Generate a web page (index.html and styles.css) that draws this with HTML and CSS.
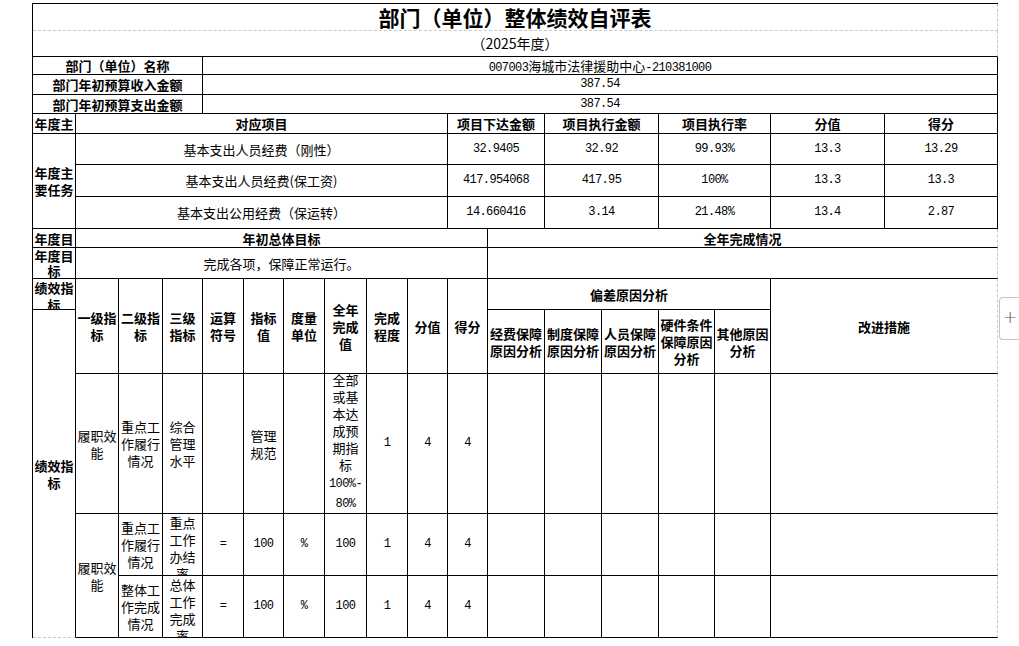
FILE: index.html
```html
<!DOCTYPE html>
<html lang="zh-CN">
<head>
<meta charset="utf-8">
<title>部门（单位）整体绩效自评表</title>
<link rel="stylesheet" href="styles.css">
</head>
<body>
<div class="sheet">
  <div class="c s18 title"><span>部门（单位）整体绩效自评表</span></div>
  <div class="c s18 subtitle"><span>（2025年度）</span></div>

  <div class="c s4 b"><span>部门（单位）名称</span></div>
  <div class="c s14"><span><span class="n">007003</span>海城市法律援助中心<span class="n">-210381000</span></span></div>
  <div class="c s4 b"><span>部门年初预算收入金额</span></div>
  <div class="c s14"><span class="n">387.54</span></div>
  <div class="c s4 b"><span>部门年初预算支出金额</span></div>
  <div class="c s14"><span class="n">387.54</span></div>

  <div class="c b"><span>年度主</span></div>
  <div class="c s9 b"><span>对应项目</span></div>
  <div class="c s2 b"><span>项目下达金额</span></div>
  <div class="c s2 b"><span>项目执行金额</span></div>
  <div class="c s2 b"><span>项目执行率</span></div>
  <div class="c b"><span>分值</span></div>
  <div class="c b"><span>得分</span></div>

  <div class="c r3 b"><span>年度主<br>要任务</span></div>
  <div class="c s9"><span>基本支出人员经费（刚性）</span></div>
  <div class="c s2"><span class="n">32.9405</span></div>
  <div class="c s2"><span class="n">32.92</span></div>
  <div class="c s2"><span class="n">99.93%</span></div>
  <div class="c"><span class="n">13.3</span></div>
  <div class="c"><span class="n">13.29</span></div>

  <div class="c s9"><span>基本支出人员经费(保工资)</span></div>
  <div class="c s2"><span class="n">417.954068</span></div>
  <div class="c s2"><span class="n">417.95</span></div>
  <div class="c s2"><span class="n">100%</span></div>
  <div class="c"><span class="n">13.3</span></div>
  <div class="c"><span class="n">13.3</span></div>

  <div class="c s9"><span>基本支出公用经费（保运转）</span></div>
  <div class="c s2"><span class="n">14.660416</span></div>
  <div class="c s2"><span class="n">3.14</span></div>
  <div class="c s2"><span class="n">21.48%</span></div>
  <div class="c"><span class="n">13.4</span></div>
  <div class="c"><span class="n">2.87</span></div>

  <div class="c b"><span>年度目</span></div>
  <div class="c s10 b"><span>年初总体目标</span></div>
  <div class="c s7 b edge"><span>全年完成情况</span></div>

  <div class="c b tight"><span>年度目<br>标</span></div>
  <div class="c s10"><span>完成各项，保障正常运行。</span></div>
  <div class="c s7 edge"></div>

  <div class="c b"><span>绩效指<br>标</span></div>
  <div class="c r2 b"><span>一级指<br>标</span></div>
  <div class="c r2 b"><span>二级指<br>标</span></div>
  <div class="c r2 b"><span>三级<br>指标</span></div>
  <div class="c r2 b"><span>运算<br>符号</span></div>
  <div class="c r2 b"><span>指标<br>值</span></div>
  <div class="c r2 b"><span>度量<br>单位</span></div>
  <div class="c r2 b"><span>全年<br>完成<br>值</span></div>
  <div class="c r2 b"><span>完成<br>程度</span></div>
  <div class="c r2 b"><span>分值</span></div>
  <div class="c r2 b"><span>得分</span></div>
  <div class="c s5 b"><span>偏差原因分析</span></div>
  <div class="c s2 r2 b edge"><span>改进措施</span></div>

  <div class="c r4 b lastfirst"><span>绩效指<br>标</span></div>
  <div class="c b"><span>经费保障<br>原因分析</span></div>
  <div class="c b"><span>制度保障<br>原因分析</span></div>
  <div class="c b"><span>人员保障<br>原因分析</span></div>
  <div class="c b"><span>硬件条件<br>保障原因<br>分析</span></div>
  <div class="c b"><span>其他原因<br>分析</span></div>

  <div class="c"><span>履职效<br>能</span></div>
  <div class="c"><span>重点工<br>作履行<br>情况</span></div>
  <div class="c"><span>综合<br>管理<br>水平</span></div>
  <div class="c"></div>
  <div class="c"><span>管理<br>规范</span></div>
  <div class="c"></div>
  <div class="c"><span class="up">全部<br>或基<br>本达<br>成预<br>期指<br>标<br><span class="n">100%-</span><br><span class="n">80%</span><br>（含）</span></div>
  <div class="c"><span class="n">1</span></div>
  <div class="c"><span class="n">4</span></div>
  <div class="c"><span class="n">4</span></div>
  <div class="c"></div>
  <div class="c"></div>
  <div class="c"></div>
  <div class="c"></div>
  <div class="c"></div>
  <div class="c s2 edge"></div>

  <div class="c r2"><span>履职效<br>能</span></div>
  <div class="c"><span>重点工<br>作履行<br>情况</span></div>
  <div class="c"><span>重点<br>工作<br>办结<br>率</span></div>
  <div class="c"><span class="n">=</span></div>
  <div class="c"><span class="n">100</span></div>
  <div class="c"><span class="n">%</span></div>
  <div class="c"><span class="n">100</span></div>
  <div class="c"><span class="n">1</span></div>
  <div class="c"><span class="n">4</span></div>
  <div class="c"><span class="n">4</span></div>
  <div class="c"></div>
  <div class="c"></div>
  <div class="c"></div>
  <div class="c"></div>
  <div class="c"></div>
  <div class="c s2 edge"></div>

  <div class="c"><span>整体工<br>作完成<br>情况</span></div>
  <div class="c"><span>总体<br>工作<br>完成<br>率</span></div>
  <div class="c"><span class="n">=</span></div>
  <div class="c"><span class="n">100</span></div>
  <div class="c"><span class="n">%</span></div>
  <div class="c"><span class="n">100</span></div>
  <div class="c"><span class="n">1</span></div>
  <div class="c"><span class="n">4</span></div>
  <div class="c"><span class="n">4</span></div>
  <div class="c"></div>
  <div class="c"></div>
  <div class="c"></div>
  <div class="c"></div>
  <div class="c"></div>
  <div class="c s2 edge"></div>
</div>
<button class="addbtn" type="button">+</button>
</body>
</html>
```

FILE: styles.css
```css
html, body {
  margin: 0;
  padding: 0;
  background: #fff;
}
body {
  font-family: "Noto Sans CJK SC", "Noto Sans", sans-serif;
  color: #000;
  width: 1019px;
  height: 646px;
  overflow: hidden;
  position: relative;
}
.sheet {
  display: grid;
  grid-template-columns: 43px 43px 44px 40px 41px 40px 41px 42px 41px 40px 40px 57px 57px 57px 56px 56px 114px 113px;
  grid-template-rows: 27px 26px 18px 20px 19px 20px 31px 32px 32px 19px 31px 31px 64px 140px 62px 62px;
  width: max-content;
  margin: 3px 0 0 32px;
  border-top: 1px solid #000;
  border-left: 1px solid #000;
}
.c {
  border-right: 1px solid #000;
  border-bottom: 1px solid #000;
  display: flex;
  align-items: safe center;
  justify-content: center;
  text-align: center;
  overflow: hidden;
  white-space: nowrap;
  font-size: 13px;
  line-height: 17px;
  min-width: 0;
  min-height: 0;
}
.c > span { display: block; }
.c > span.up { margin-top: -3px; }

.s2 { grid-column: span 2; }
.s4 { grid-column: span 4; }
.s5 { grid-column: span 5; }
.s7 { grid-column: span 7; }
.s9 { grid-column: span 9; }
.s10 { grid-column: span 10; }
.s14 { grid-column: span 14; }
.s18 { grid-column: span 18; }
.r2 { grid-row: span 2; }
.r3 { grid-row: span 3; }
.r4 { grid-row: span 4; }

.b { font-weight: bold; }
.n {
  font-family: "Liberation Mono", monospace;
  font-size: 12px;
  letter-spacing: -0.6px;
}
.tight { line-height: 15px; }

.title {
  font-size: 21px;
  font-weight: bold;
  line-height: 22px;
  border-right: 1px dashed #c8c8c8;
  border-bottom: 1px dashed #c8c8c8;
}
.subtitle {
  font-size: 14px;
  border-right: 1px dashed #c8c8c8;
}
.edge {
  border-right: 1px dashed #c8c8c8;
}
.lastfirst {
  border-bottom: 1px dashed #c8c8c8;
}

.addbtn {
  position: absolute;
  left: 999px;
  top: 297px;
  width: 22px;
  height: 43px;
  padding: 0 0 2px 3px;
  border: 1px solid #c4c4c4;
  border-right: none;
  border-radius: 4px 0 0 4px;
  background: #fff;
  color: #555;
  font-family: "DejaVu Sans", sans-serif;
  font-size: 17px;
  font-weight: 300;
  line-height: 1;
  text-align: left;
}
```
